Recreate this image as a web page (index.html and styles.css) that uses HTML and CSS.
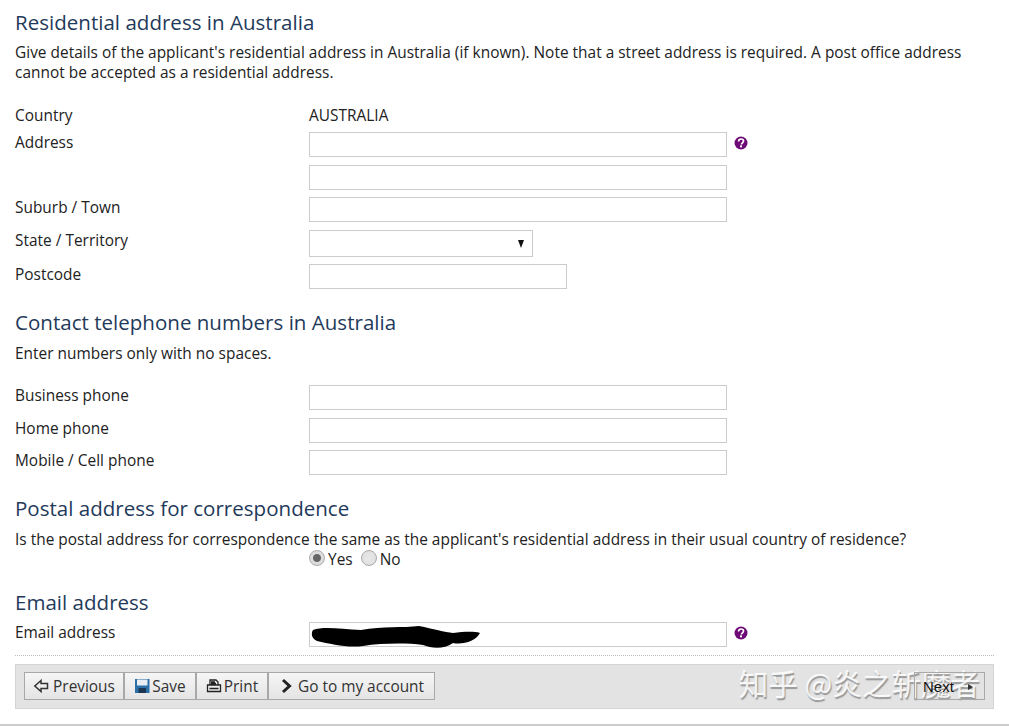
FILE: index.html
```html
<!DOCTYPE html>
<html lang="en">
<head>
<meta charset="utf-8">
<title>Residential address</title>
<link rel="stylesheet" href="styles.css">
</head>
<body>
<main class="page">
  <h2 class="h-first">Residential address in Australia</h2>
  <p class="intro">Give details of the applicant's residential address in Australia (if known). Note that a street address is required. A post office address cannot be accepted as a residential address.</p>
  <div class="rows rows-res">
    <div class="row r-country"><span class="lab">Country</span><span class="val">AUSTRALIA</span></div>
    <div class="row r-addr"><span class="lab">Address</span><input class="inp wide" type="text"><svg class="help" viewBox="0 0 14 14"><circle cx="7" cy="7" r="6.500" fill="#6d0a75"/><path d="M4.600 5.400c0-1.500 1-2.400 2.500-2.400s2.400.9 2.400 2c0 1.900-2 1.700-2 3.400" fill="none" stroke="#fff" stroke-width="1.700"/><rect x="6" y="9.400" width="2" height="1.900" fill="#fff"/></svg></div>
    <div class="row r-addr2"><span class="lab"></span><input class="inp wide" type="text"></div>
    <div class="row r-sub"><span class="lab">Suburb / Town</span><input class="inp wide" type="text"></div>
    <div class="row r-state"><span class="lab">State / Territory</span><div class="sel"><span class="arrow"></span></div></div>
    <div class="row r-post"><span class="lab">Postcode</span><input class="inp mid" type="text"></div>
  </div>
  <h2 class="h-tel">Contact telephone numbers in Australia</h2>
  <p class="note">Enter numbers only with no spaces.</p>
  <div class="rows rows-tel">
    <div class="row"><span class="lab">Business phone</span><input class="inp wide" type="text"></div>
    <div class="row r-home"><span class="lab">Home phone</span><input class="inp wide" type="text"></div>
    <div class="row r-mob"><span class="lab">Mobile / Cell phone</span><input class="inp wide" type="text"></div>
  </div>
  <h2 class="h-post">Postal address for correspondence</h2>
  <p class="note">Is the postal address for correspondence the same as the applicant's residential address in their usual country of residence?</p>
  <div class="radios">
    <span class="radio on"></span><span class="rlabel">Yes</span>
    <span class="radio"></span><span class="rlabel">No</span>
  </div>
  <h2 class="h-email">Email address</h2>
  <div class="row r-email"><span class="lab">Email address</span>
    <div class="email-wrap"><input class="inp wide" type="text">
      <svg class="scribble" viewBox="0 0 170 24"><path d="M2 5C12 1 30 4 50 5C72 1 92 3 108 1C122 4 134 7 142 8C152 7 162 6 169 8C165 16 152 20 142 18C132 25 120 23 112 20C96 18 72 18 52 21C36 23 20 19 6 16C0 13 0 8 2 5Z" fill="#000"/></svg>
    </div>
    <svg class="help" viewBox="0 0 14 14"><circle cx="7" cy="7" r="6.500" fill="#6d0a75"/><path d="M4.600 5.400c0-1.500 1-2.400 2.500-2.400s2.400.9 2.400 2c0 1.900-2 1.700-2 3.400" fill="none" stroke="#fff" stroke-width="1.700"/><rect x="6" y="9.400" width="2" height="1.900" fill="#fff"/></svg>
  </div>
  <div class="dots"></div>
  <div class="bar">
    <div class="btns">
      <button class="btn b-prev"><svg class="ic" viewBox="0 0 16 16"><path d="M8 2.500 1.800 8 8 13.500V10.500H14.500V5.500H8Z" fill="none" stroke="#333" stroke-width="1.500"/></svg><span class="btxt">Previous</span></button>
      <button class="btn b-save"><svg class="ic" viewBox="0 0 16 16"><rect x="1" y="1" width="14.500" height="14" fill="#2a6fa8"/><rect x="3" y="1.500" width="10.500" height="6" fill="#e8eef4"/><rect x="4.500" y="10" width="7.500" height="5" fill="#1b3550"/></svg><span class="btxt">Save</span></button>
      <button class="btn b-print"><svg class="ic" viewBox="0 0 16 16"><path d="M4 7V2H10L12 4V7M1.500 7H14.500V13.500H1.500ZM5 4H9M5 5.500H10M3.500 10.500H12.500" fill="none" stroke="#222" stroke-width="1.300"/></svg><span class="btxt">Print</span></button>
      <button class="btn b-go"><svg class="ic" viewBox="0 0 16 16"><path d="M4 2 10.500 8 4 14" fill="none" stroke="#222" stroke-width="3"/></svg><span class="btxt">Go to my account</span></button>
    </div>
    <button class="next"><span class="ntxt">Next</span><span class="next-arrow"></span></button>
    <div class="wm">知乎 @炎之斩魔者</div>
  </div>
  <div class="rule"></div>
</main>
</body>
</html>
```
FILE: styles.css
```css
* { box-sizing: border-box; }
html, body { margin: 0; padding: 0; background: #fff; }
body { font-family: "Open Sans", "Noto Sans", sans-serif; font-size: 15.400px; letter-spacing: .025px; color: #222; line-height: 20px; overflow: hidden; }
.page { width: 1009px; height: 726px; padding: 0 0 0 15px; position: relative; }
h2 { font-size: 20.500px; font-weight: 400; color: #1f3a5a; margin: 0; padding-bottom: 2px; line-height: 26px; }
.h-first { padding-top: 9px; height: 37px; }
.intro { margin: 6px 0 0; width: 960px; }
.note { margin: 0; white-space: nowrap; }
.rows-res { margin-top: 22px; }
.row { display: flex; align-items: flex-start; }
.lab { width: 294px; flex: none; padding-top: 1px; }
.val { padding-top: 1px; }
.r-country { height: 20px; margin-top: 3px; }
.r-addr { margin-top: 7px; }
.r-addr2 { margin-top: 8px; }
.r-sub { margin-top: 7px; }
.r-state { margin-top: 8px; }
.r-post { margin-top: 7px; }
.inp { display: block; height: 25px; border: 1px solid #ccc; background: #fff; padding: 0; margin: 0; border-radius: 0; outline: none; }
.wide { width: 418px; }
.mid { width: 258px; }
.sel { width: 224px; height: 27px; border: 1px solid #ccc; position: relative; background: #fff; }
.arrow { position: absolute; right: 8px; top: 9px; width: 0; height: 0; border-left: 3.500px solid transparent; border-right: 3.500px solid transparent; border-top: 8px solid #111; }
.help { width: 14px; height: 14px; margin: 4px 0 0 7px; flex: none; }
.h-tel { margin-top: 20px; }
.h-tel + .note { margin-top: 7px; }
.rows-tel { margin-top: 21px; }
.r-home { margin-top: 8px; }
.r-mob { margin-top: 7px; }
.h-post { margin-top: 20px; }
.h-post + .note { margin-top: 7px; }
.radios { display: flex; align-items: center; margin-left: 294px; height: 20px; }
.radio { width: 16px; height: 16px; border-radius: 50%; border: 1px solid #aaa; background: radial-gradient(circle, #e8e8e8, #ddd); position: relative; top: -2px; flex: none; }
.radio.on { background: radial-gradient(circle, #666 0 3.500px, #ddd 4.500px); }
.rlabel { margin: 0 8px 0 3px; }
.h-email { margin-top: 19px; }
.r-email { margin-top: 5px; }
.email-wrap { position: relative; }
.scribble { position: absolute; left: 2px; top: 3px; width: 170px; height: 24px; }
.dots { margin-top: 8px; width: 979px; border-top: 1px dotted #bbb; }
.bar { position: relative; margin-top: 8px; width: 979px; height: 45px; background: #e3e3e3; border: 1px solid #d4d4d4; padding: 7px 8px; display: flex; justify-content: space-between; }
.btns { display: flex; }
.btn, .next { height: 28px; border: 1px solid #a8a8a8; background: linear-gradient(#f6f6f6, #e4e4e4); font: inherit; color: #333; padding: 0; display: flex; align-items: center; justify-content: center; gap: 2px; white-space: nowrap; }
.btxt { padding-top: 1px; }
.b-prev { width: 100px; gap: 4px; }
.b-save { width: 72px; }
.b-print { width: 72px; }
.b-go { width: 167px; gap: 3px; }
.ic { width: 16px; height: 16px; flex: none; }
.next { position: relative; z-index: 1; width: 71px; background: transparent; font-family: "Liberation Sans", sans-serif; font-size: 15px; color: #111; justify-content: space-between; padding: 1px 11px 0 8px; }
.next-arrow { width: 0; height: 0; border-top: 3px solid transparent; border-bottom: 3px solid transparent; border-left: 5px solid #333; }
.wm { position: absolute; right: 13px; top: -3px; font-family: "Noto Sans CJK SC", sans-serif; font-size: 29.500px; line-height: 40px; color: rgba(255,255,255,.85); text-shadow: 1px 2px 1px rgba(90,90,90,.55); white-space: nowrap; }
.rule { margin-top: 15px; margin-left: -15px; width: 1009px; border-top: 2px solid #ccc; }
```
